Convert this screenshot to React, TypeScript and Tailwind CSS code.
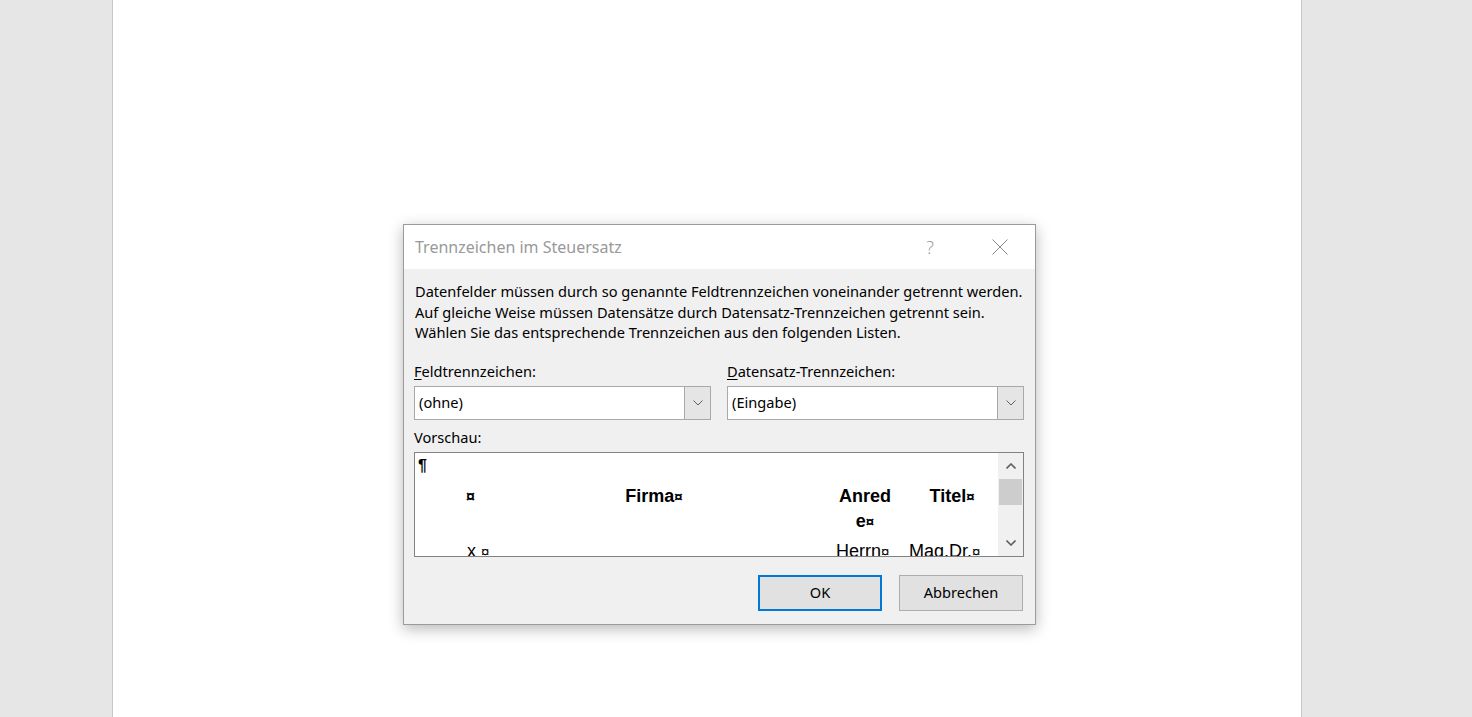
import React from 'react';

const ChevronDown = ({ className = "" }: { className?: string }) => (
  <svg width="10" height="6" viewBox="0 0 10 6" className={className} fill="none">
    <path d="M0.5 0.5 L5 5 L9.5 0.5" stroke="currentColor" strokeWidth="1" />
  </svg>
);

const ChevronUp = ({ className = "" }: { className?: string }) => (
  <svg width="10" height="6" viewBox="0 0 10 6" className={className} fill="none">
    <path d="M0.5 5.5 L5 1 L9.5 5.5" stroke="currentColor" strokeWidth="1.6" />
  </svg>
);

const Select = ({ value }: { value: string }) => (
  <div className="flex h-[34px] border border-[#a9a9a9] bg-white">
    <div className="flex flex-1 items-center pl-[4px] text-[14.6px] text-black">{value}</div>
    <div className="flex w-[26px] items-center justify-center border-l border-[#a9a9a9] bg-[#e5e5e5] text-[#606060]">
      <ChevronDown />
    </div>
  </div>
);

const App = () => {
  return (
    <div className="flex h-[717px] w-full overflow-hidden bg-[#e6e6e6] font-['Noto_Sans','Open_Sans',sans-serif]">
      <div className="w-[112px] shrink-0" />
      {/* Word page */}
      <div className="h-full w-[1190px] shrink-0 border-x border-[#c8c8c8] bg-white">
        <div className="ml-[290px] mt-[224px] w-[633px] border border-[#9b9b9b] bg-[#f0f0f0] shadow-[0_4px_14px_rgba(0,0,0,0.28)]">
          {/* Title bar */}
          <div className="flex h-[44px] items-center bg-white">
            <span className="ml-[11px] text-[16px] text-[#999999]">Trennzeichen im Steuersatz</span>
            <span className="ml-auto mr-[58px] text-[18px] font-light text-[#a0a0a0]">?</span>
            <svg width="16" height="16" viewBox="0 0 16 16" className="mr-[27px] text-[#8a8a8a]">
              <path d="M0.5 0.5 L15.5 15.5 M15.5 0.5 L0.5 15.5" stroke="currentColor" strokeWidth="1" />
            </svg>
          </div>

          {/* Body */}
          <div className="pl-[10px] pr-[11px] pt-[12px] pb-[13px]">
            <p className="whitespace-nowrap pl-[1px] text-[14.6px] leading-[20.5px] text-black">
              Datenfelder müssen durch so genannte Feldtrennzeichen voneinander getrennt werden.
              <br />
              Auf gleiche Weise müssen Datensätze durch Datensatz-Trennzeichen getrennt sein.
              <br />
              Wählen Sie das entsprechende Trennzeichen aus den folgenden Listen.
            </p>

            <div className="mt-[18px] grid grid-cols-2 gap-[16px]">
              <div>
                <div className="mb-[5px] text-[14.6px] leading-[20px]">
                  <span className="underline underline-offset-2">F</span>eldtrennzeichen:
                </div>
                <Select value="(ohne)" />
              </div>
              <div>
                <div className="mb-[5px] text-[14.6px] leading-[20px]">
                  <span className="underline underline-offset-2">D</span>atensatz-Trennzeichen:
                </div>
                <Select value="(Eingabe)" />
              </div>
            </div>

            <div className="mt-[7px] text-[14.6px] leading-[20px]">Vorschau:</div>

            {/* Preview */}
            <div className="mt-[5px] flex h-[105px] border border-[#828282] bg-white">
              <div className="flex-1 overflow-hidden font-['Liberation_Sans',Arial,sans-serif] text-black">
                <div className="pl-[3px] pt-[3px] text-[16px] font-bold leading-[20px]">¶</div>
                <div className="mt-[8px] flex text-[18px] font-bold leading-[25px]">
                  <div className="w-[142px] shrink-0 pl-[51px] text-[16px] leading-[25px]">¤</div>
                  <div className="w-[204px] shrink-0 pr-[10px] text-center">Firma<span className="text-[15px]">¤</span></div>
                  <div className="w-[69px] shrink-0" />
                  <div className="w-[70px] shrink-0 text-center">
                    Anred
                    <br />
                    e<span className="text-[15px]">¤</span>
                  </div>
                  <div className="w-[110px] shrink-0 pr-[6px] text-center">Titel<span className="text-[15px]">¤</span></div>
                </div>
                <div className="mt-[5px] flex text-[18px] leading-[25px]">
                  <div className="w-[142px] shrink-0 pl-[52px]">x <span className="text-[15px]">¤</span></div>
                  <div className="w-[204px] shrink-0" />
                  <div className="w-[69px] shrink-0" />
                  <div className="w-[79px] shrink-0 whitespace-nowrap pl-[6px]">Herrn<span className="text-[15px]">¤</span></div>
                  <div className="w-[105px] shrink-0 whitespace-nowrap">Mag.Dr.<span className="text-[15px]">¤</span></div>
                </div>
              </div>
              <div className="flex w-[25px] flex-col items-center bg-[#f0f0f0] text-[#606060]">
                <div className="flex h-[26px] items-center justify-center">
                  <ChevronUp />
                </div>
                <div className="h-[26px] w-[23px] bg-[#cdcdcd]" />
                <div className="flex-1" />
                <div className="flex h-[26px] items-center justify-center">
                  <svg width="10" height="6" viewBox="0 0 10 6" fill="none">
                    <path d="M0.5 0.5 L5 5 L9.5 0.5" stroke="currentColor" strokeWidth="1.6" />
                  </svg>
                </div>
              </div>
            </div>

            {/* Buttons */}
            <div className="mt-[18px] flex justify-end gap-[17px] pr-[1px]">
              <button className="h-[36px] w-[124px] border-2 border-[#0078d7] bg-[#e1e1e1] text-[14.6px] text-black">
                OK
              </button>
              <button className="h-[36px] w-[124px] border border-[#adadad] bg-[#e1e1e1] text-[14.6px] text-black">
                Abbrechen
              </button>
            </div>
          </div>
        </div>
      </div>
    </div>
  );
};

export default App;
